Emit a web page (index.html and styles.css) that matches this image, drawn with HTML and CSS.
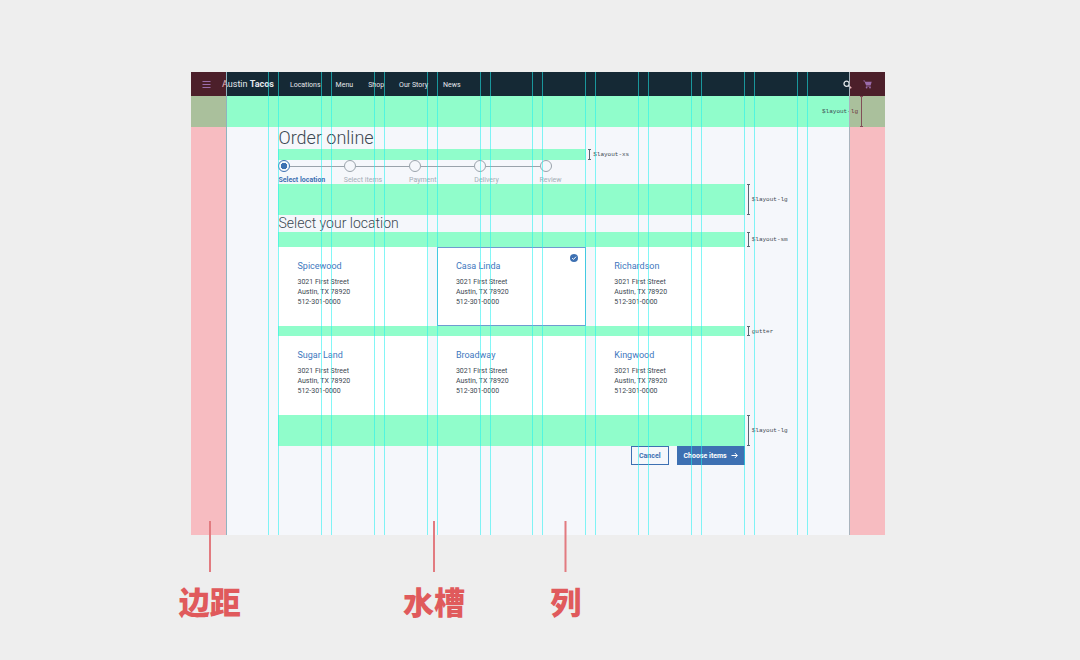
FILE: index.html
```html
<!DOCTYPE html>
<html lang="zh-CN">
<head>
<meta charset="utf-8">
<meta name="viewport" content="width=device-width, initial-scale=1">
<title>Austin Tacos</title>
<link rel="stylesheet" href="styles.css">
</head>
<body>
<main class="stage">
  <div class="mock" lang="en">
    <header class="header">
      <button class="icon-button menu-button" type="button" aria-label="Menu">
        <svg viewBox="0 0 9 9" width="9" height="9" fill="none" stroke="currentColor"><path d="M.5 1.5h8M.5 4.5h8M.5 7.5h8"/></svg>
      </button>
      <a class="brand" href="#">Austin <b>Tacos</b></a>
      <nav class="nav">
        <a href="#">Locations</a>
        <a href="#">Menu</a>
        <a href="#">Shop</a>
        <a href="#">Our Story</a>
        <a href="#">News</a>
      </nav>
      <div class="tools">
        <button class="icon-button search-button" type="button" aria-label="Search">
          <svg viewBox="0 0 9 9" width="9" height="9" fill="none" stroke="currentColor"><circle cx="3.6" cy="3.7" r="2.6" stroke-width="1.3"/><path d="M5.6 5.6 8.2 8.2" stroke-width="1.6"/></svg>
        </button>
        <button class="icon-button cart-button" type="button" aria-label="Cart">
          <svg viewBox="0 0 9 9" width="9" height="9"><path d="M.3.6h1.5l.5 1.2h6.4L7.6 5.4H3.1L1.4 1.3H.3zM2.9 5.9h4.8v.7H2.9z" fill="currentColor"/><circle cx="3.6" cy="7.6" r=".9" fill="currentColor"/><circle cx="7" cy="7.6" r=".9" fill="currentColor"/></svg>
        </button>
      </div>
    </header>
    <div class="band band-lg band-top"><span class="measure measure-inside">$layout-lg</span></div>

    <div class="page">
      <div class="content">
        <h1 class="title">Order online</h1>
        <div class="band band-xs"><span class="measure">$layout-xs</span></div>
        <ol class="steps">
          <li class="step current"><span class="track"></span>Select location</li>
          <li class="step"><span class="track"></span>Select items</li>
          <li class="step"><span class="track"></span>Payment</li>
          <li class="step"><span class="track"></span>Delivery</li>
          <li class="step"><span class="track"></span>Review</li>
        </ol>
        <div class="band band-lg"><span class="measure">$layout-lg</span></div>
        <h2 class="subtitle">Select your location</h2>
        <div class="band band-sm"><span class="measure">$layout-sm</span></div>
        <div class="cards">
          <label class="card"><input class="pick" type="radio" name="location"><span class="card-name">Spicewood</span><span class="address">3021 First Street<br>Austin, TX 78920<br>512-301-0000</span></label>
          <label class="card"><input class="pick" type="radio" name="location" checked><svg class="tick" viewBox="0 0 8 8" width="8" height="8" fill="none" stroke="#fff"><path d="M2.1 4.1 3.5 5.4 6 2.7"/></svg><span class="card-name">Casa Linda</span><span class="address">3021 First Street<br>Austin, TX 78920<br>512-301-0000</span></label>
          <label class="card"><input class="pick" type="radio" name="location"><span class="card-name">Richardson</span><span class="address">3021 First Street<br>Austin, TX 78920<br>512-301-0000</span></label>
        </div>
        <div class="band band-gutter"><span class="measure">gutter</span></div>
        <div class="cards">
          <label class="card"><input class="pick" type="radio" name="location"><span class="card-name">Sugar Land</span><span class="address">3021 First Street<br>Austin, TX 78920<br>512-301-0000</span></label>
          <label class="card"><input class="pick" type="radio" name="location"><span class="card-name">Broadway</span><span class="address">3021 First Street<br>Austin, TX 78920<br>512-301-0000</span></label>
          <label class="card"><input class="pick" type="radio" name="location"><span class="card-name">Kingwood</span><span class="address">3021 First Street<br>Austin, TX 78920<br>512-301-0000</span></label>
        </div>
        <div class="band band-lg"><span class="measure">$layout-lg</span></div>
        <div class="actions">
          <button class="button button-secondary" type="button">Cancel</button>
          <button class="button button-primary" type="button">Choose items
            <svg viewBox="0 0 7 7" width="7" height="7" fill="none" stroke="currentColor"><path d="M.5 3.5h5.7M3.8 1l2.5 2.5L3.8 6"/></svg>
          </button>
        </div>
      </div>
    </div>

    <div class="overlay" aria-hidden="true">
      <div class="columns"><i></i><i></i><i></i><i></i><i></i><i></i><i></i><i></i><i></i><i></i><i></i><i></i></div>
    </div>

    <div class="callout callout-margin" lang="zh-CN">边距</div>
    <div class="callout callout-gutter" lang="zh-CN">水槽</div>
    <div class="callout callout-column" lang="zh-CN">列</div>
  </div>
</main>
</body>
</html>
```
FILE: styles.css
```css
*, *::before, *::after { box-sizing: border-box; }

body {
  margin: 0;
  min-height: 100vh;
  background: #eee;
  color: #3c4851;
  font-family: Roboto, "Noto Sans", sans-serif;
  font-size: 7px;
}

h1, h2, ol { margin: 0; padding: 0; font-weight: 300; }
a { color: inherit; text-decoration: none; }
button { margin: 0; color: inherit; font: inherit; cursor: pointer; }
svg { display: block; }

.stage {
  display: grid;
  grid-template-columns: 191fr 694fr 195fr;
  padding: 72px 0 125px;
}

.mock {
  --gutter: 9px;
  --margin: 5%;
  --green: #90fdcb;
  --blue: #3d70b2;
  grid-column: 2;
  position: relative;
  background: #f5f7fb;
}

/* Header */
.header {
  display: flex;
  align-items: center;
  height: 24px;
  padding: 0 13px 0 11px;
  background: #152935;
  color: #e4e8eb;
}
.icon-button {
  padding: 0;
  border: 0;
  background: none;
}
.menu-button, .cart-button { color: #7c8fe0; }
.brand { margin-left: 11px; font-size: 9px; }
.nav { display: flex; gap: 15px; margin-left: 16px; padding-top: 1px; }
.tools { display: flex; gap: 11px; margin-left: auto; }

/* Spacing bands */
.band { position: relative; background: var(--green); }
.band-lg { height: 31px; }
.band-sm { height: 15px; }
.band-xs { height: 11px; width: 66%; }
.band-gutter { height: 10px; }
.measure {
  position: absolute;
  top: 0;
  bottom: 0;
  left: 100%;
  display: flex;
  align-items: center;
  gap: 2px;
  margin-left: 2px;
  font-family: "Liberation Mono", monospace;
  font-size: 6px;
  white-space: nowrap;
}
.measure::before {
  content: "";
  align-self: stretch;
  width: 3px;
  background:
    linear-gradient(#5a6872, #5a6872) center / 1px 100% no-repeat,
    linear-gradient(#5a6872, #5a6872) top / 3px 1px no-repeat,
    linear-gradient(#5a6872, #5a6872) bottom / 3px 1px no-repeat;
}
.measure-inside {
  left: auto;
  right: 22px;
  flex-direction: row-reverse;
}

/* Page */
.page {
  display: grid;
  grid-template-columns: repeat(12, 1fr);
  column-gap: var(--gutter);
  padding: 0 var(--margin) 70px;
}
.content { grid-column: 2 / 11; }
.title { font-size: 18px; line-height: 22px; }
.subtitle { font-size: 14px; line-height: 17px; }

/* Steps */
.steps {
  display: grid;
  grid-template-columns: repeat(5, 14%);
  list-style: none;
}
.step {
  color: #a4adb6;
  font-weight: 400;
  line-height: 8px;
  white-space: nowrap;
}
.track {
  display: flex;
  align-items: center;
  margin-bottom: 4px;
}
.track::before {
  content: "";
  width: 12px;
  height: 12px;
  border: 1px solid #9aa3ab;
  border-radius: 50%;
}
.track::after {
  content: "";
  flex: 1;
  height: 1px;
  background: #9aa3ab;
}
.step:last-child .track::after { display: none; }
.current { color: var(--blue); font-weight: 700; }
.current .track::before {
  border-color: var(--blue);
  background: radial-gradient(circle, var(--blue) 3px, transparent 3.5px);
}

/* Location cards */
.cards {
  display: grid;
  grid-template-columns: repeat(3, 1fr);
  gap: var(--gutter);
}
.card {
  position: relative;
  display: block;
  padding: 13px 18px 18px;
  border: 1px solid #fff;
  background: #fff;
}
.card:has(:checked) { border-color: #6f9bd0; }
.card-name {
  display: block;
  margin-bottom: 6px;
  color: #4178be;
  font-size: 9px;
  line-height: 10px;
}
.address { display: block; line-height: 10px; }
.pick {
  position: absolute;
  top: 6px;
  right: 7px;
  width: 8px;
  height: 8px;
  margin: 0;
  border-radius: 50%;
  appearance: none;
}
.pick:checked { background: var(--blue); }
.tick { position: absolute; top: 6px; right: 7px; }

/* Actions */
.actions { display: flex; justify-content: flex-end; gap: 8px; }
.button {
  display: flex;
  align-items: center;
  gap: 4px;
  height: 19px;
  padding: 0 7px;
  border: 1px solid var(--blue);
  font-weight: 700;
}
.button-primary { padding: 0 6px; background: var(--blue); color: #fff; }
.button-secondary { background: transparent; color: var(--blue); }

/* Layout grid overlay */
.overlay {
  position: absolute;
  inset: 0;
  display: grid;
  grid-template-columns: 5% 1fr 5%;
  pointer-events: none;
}
.overlay::before, .overlay::after {
  content: "";
  background: rgba(255, 0, 10, 0.24);
}
.columns {
  display: grid;
  grid-template-columns: repeat(12, 1fr);
  column-gap: var(--gutter);
}
.columns i {
  --start: rgba(30, 240, 240, 0.55);
  --end: rgba(30, 240, 240, 0.55);
  background:
    linear-gradient(var(--start), var(--start)) left / 1px 100% no-repeat,
    linear-gradient(var(--end), var(--end)) right / 1px 100% no-repeat;
}
.columns i:first-child { --start: #8fb4c0; }
.columns i:last-child { --end: #a9b4bd; }

/* Callouts */
.callout {
  position: absolute;
  top: calc(100% - 14px);
  display: flex;
  flex-direction: column;
  align-items: center;
  gap: 11px;
  transform: translateX(-50%);
  color: #e05a5c;
  font-family: "Noto Sans CJK SC", sans-serif;
  font-size: 31px;
  font-weight: 900;
  line-height: 36px;
  white-space: nowrap;
}
.callout::before {
  content: "";
  width: 2px;
  height: 51px;
  background: #e27b80;
}
.callout-margin { left: 2.7%; }
.callout-gutter { left: 35%; }
.callout-column { left: 54%; }
```
